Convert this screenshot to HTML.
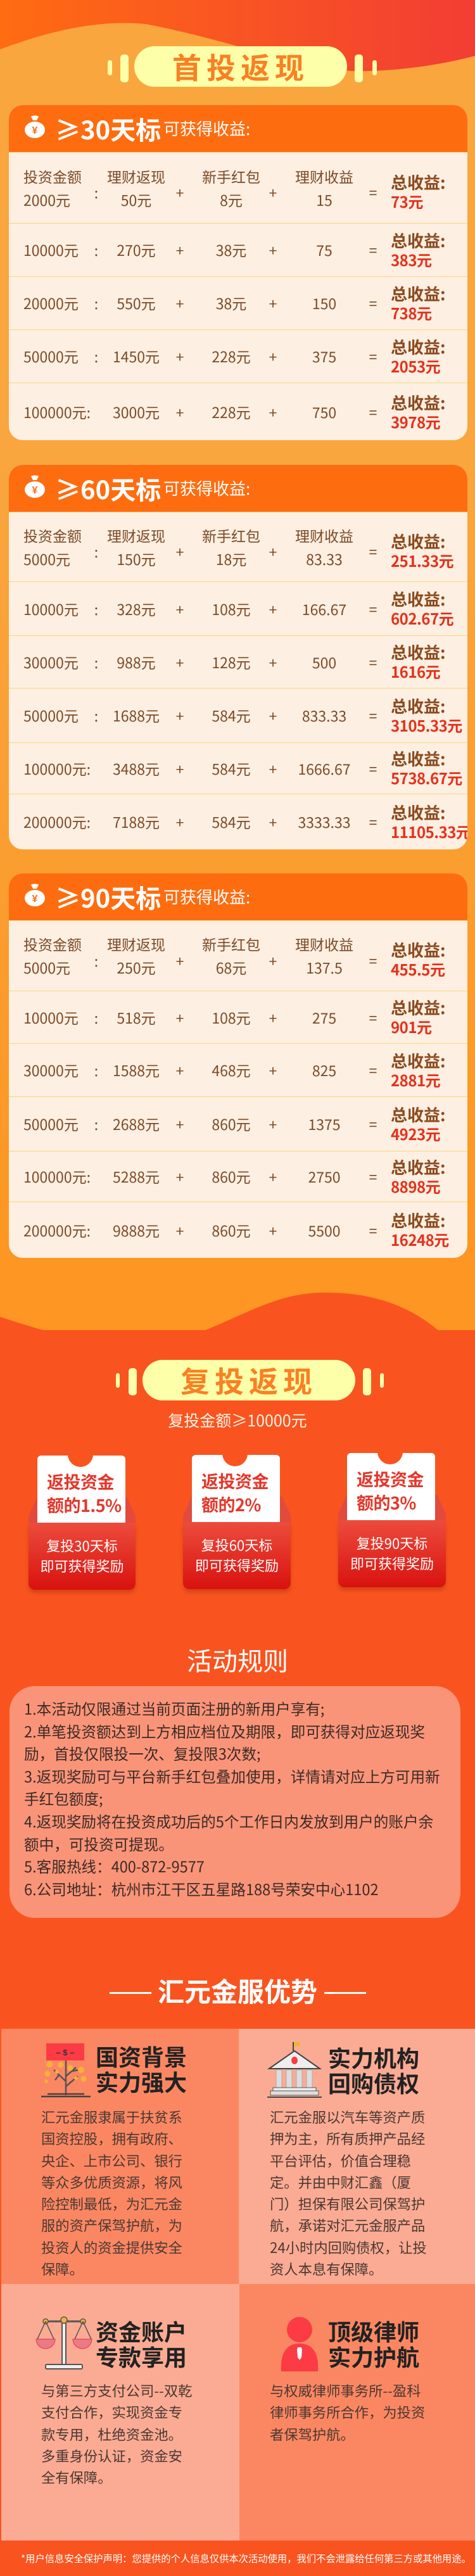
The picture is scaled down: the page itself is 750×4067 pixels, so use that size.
<!DOCTYPE html>
<html><head><meta charset="utf-8">
<style>
*{margin:0;padding:0;box-sizing:border-box}
body{width:750px;height:4067px;position:relative;overflow:hidden;font-family:"Liberation Sans","Noto Sans CJK SC",sans-serif;background:#f9541f}
.abs{position:absolute}
.topbg{left:0;top:0;width:750px;height:2100px;background:linear-gradient(#f9a63f 0,#f9a63f 700px,#fd9622 2000px)}
.bar{position:absolute;background:#feffa9;border-radius:5px}
.pill{position:absolute;background:#feffa9;border-radius:34px;text-align:center;color:#f98024;font-weight:bold;font-size:46px;letter-spacing:8px;font-family:"Noto Sans CJK SC",sans-serif}
.card{position:absolute;left:14px;width:724px;background:#fdefe2;border-radius:22px;overflow:hidden}
.hd{height:74px;background:#fe6c10;position:relative;color:#fff}
.bag{position:absolute;left:24px;top:16px}
.hd .t{position:absolute;left:73px;top:8px;font-size:40px;font-weight:bold;font-family:"Noto Sans CJK SC",sans-serif}
.hd .s{position:absolute;left:244px;top:18px;font-size:26px;font-family:"Noto Sans CJK SC",sans-serif}
.r{position:relative;border-top:1px solid #fbd77a;color:#7b4a26;font-size:23px;font-family:"Noto Sans CJK SC",sans-serif}
.r:first-of-type{border-top:none}
.c{position:absolute;top:0;height:100%;display:flex;align-items:center;justify-content:center;text-align:center;line-height:37px;white-space:nowrap}
.c1{left:23px;width:auto;justify-content:flex-start;text-align:left}
.k{left:118px;width:40px}
.c2{left:141px;width:120px}
.p1{left:250px;width:40px}
.c3{left:291px;width:120px}
.p2{left:397px;width:40px}
.c4{left:438px;width:120px}
.e{left:555px;width:40px}
.tot{left:603px;justify-content:flex-start;text-align:left;line-height:30px}
.tot b{display:block;color:#8b4a1e;font-size:26px}
.tot i{display:block;font-style:normal;font-weight:bold;color:#e5311b;font-size:24px;letter-spacing:-0.5px}
.h .k,.h .p1,.h .p2,.h .e{padding-top:14px}
.h .tot{padding-top:12px}
.ticket{position:absolute;background:#fff;border-radius:6px 6px 0 0;overflow:hidden}
.notch{position:absolute;width:40px;height:40px;border-radius:50%;background:#f9541f;top:-22px}
.ticket p{position:absolute;left:15px;top:22px;color:#e4372b;font-size:27px;font-weight:bold;line-height:37px;white-space:nowrap;letter-spacing:-0.5px;font-family:"Noto Sans CJK SC",sans-serif}
.back{position:absolute;background:#e14a3c;clip-path:polygon(8% 0,92% 0,100% 60%,100% 100%,0 100%,0 60%)}
.pocket{position:absolute;background:linear-gradient(#ec4c3c,#d9120f);border-radius:4px 4px 10px 10px;box-shadow:0 5px 6px rgba(150,40,10,.35);color:#fff;font-size:22px;text-align:center;line-height:32px;white-space:nowrap;font-family:"Noto Sans CJK SC",sans-serif}
.rules{position:absolute;left:15px;top:2662px;width:712px;height:366px;background:#fa9478;border-radius:40px;padding:18px 20px 0 23px;color:#3b2a26;font-size:23.6px;line-height:35.6px;font-family:"Noto Sans CJK SC",sans-serif}
.cell{position:absolute}
.cell h3{position:absolute;font-size:36px;line-height:40px;color:#222;font-weight:bold;font-family:"Noto Sans CJK SC",sans-serif}
.cell .b{position:absolute;font-size:22.3px;line-height:34.3px;color:#4a3833;white-space:nowrap;font-family:"Noto Sans CJK SC",sans-serif}
</style></head><body>
<div class="abs topbg"></div>
<svg class="abs" style="left:0;top:0" width="750" height="130">
<defs><linearGradient id="g1" x1="0" x2="1"><stop offset="0" stop-color="#ff6c12"/><stop offset="1" stop-color="#f23d34"/></linearGradient></defs>
<path d="M0,0 H750 V88 C700,102 620,114 555,112 C470,108 360,62 230,38 C150,30 70,52 0,78 Z" fill="url(#g1)"/>
</svg>
<div class="bar" style="left:170px;top:95px;width:7px;height:24px"></div>
<div class="bar" style="left:190px;top:86px;width:13px;height:44px"></div>
<div class="bar" style="left:560px;top:86px;width:13px;height:44px"></div>
<div class="bar" style="left:588px;top:95px;width:7px;height:24px"></div>
<div class="pill" style="left:212px;top:73px;width:336px;height:64px;line-height:64px">首投返现</div>

<!-- card 1 -->
<div class="card" style="top:166px;height:529px">
<div class="hd"><svg class="bag" width="34" height="36" viewBox="0 0 34 36"><path d="M11,2 C13,0 21,0 23,2 L20,8 L14,8 Z" fill="#fff"/><ellipse cx="17" cy="23" rx="16" ry="13" fill="#fff"/><text x="17" y="29" font-size="16" font-weight="bold" fill="#fe6c10" text-anchor="middle" font-family="Liberation Sans">¥</text></svg><span class="t">≥30天标</span><span class="s">可获得收益:</span></div>
<div class="r h" style="height:112px"><span class="c c1">投资金额<br>2000元</span><span class="c k">:</span><span class="c c2">理财返现<br>50元</span><span class="c p1">+</span><span class="c c3">新手红包<br>8元</span><span class="c p2">+</span><span class="c c4">理财收益<br>15</span><span class="c e">=</span><span class="c tot"><span><b>总收益:</b><i>73元</i></span></span></div>
<div class="r" style="height:84px"><span class="c c1">10000元</span><span class="c k">:</span><span class="c c2">270元</span><span class="c p1">+</span><span class="c c3">38元</span><span class="c p2">+</span><span class="c c4">75</span><span class="c e">=</span><span class="c tot"><span><b>总收益:</b><i>383元</i></span></span></div>
<div class="r" style="height:84px"><span class="c c1">20000元</span><span class="c k">:</span><span class="c c2">550元</span><span class="c p1">+</span><span class="c c3">38元</span><span class="c p2">+</span><span class="c c4">150</span><span class="c e">=</span><span class="c tot"><span><b>总收益:</b><i>738元</i></span></span></div>
<div class="r" style="height:84px"><span class="c c1">50000元</span><span class="c k">:</span><span class="c c2">1450元</span><span class="c p1">+</span><span class="c c3">228元</span><span class="c p2">+</span><span class="c c4">375</span><span class="c e">=</span><span class="c tot"><span><b>总收益:</b><i>2053元</i></span></span></div>
<div class="r" style="height:92px"><span class="c c1">100000元:</span><span class="c c2">3000元</span><span class="c p1">+</span><span class="c c3">228元</span><span class="c p2">+</span><span class="c c4">750</span><span class="c e">=</span><span class="c tot"><span><b>总收益:</b><i>3978元</i></span></span></div>
</div>

<!-- card 2 -->
<div class="card" style="top:734px;height:607px">
<div class="hd"><svg class="bag" width="34" height="36" viewBox="0 0 34 36"><path d="M11,2 C13,0 21,0 23,2 L20,8 L14,8 Z" fill="#fff"/><ellipse cx="17" cy="23" rx="16" ry="13" fill="#fff"/><text x="17" y="29" font-size="16" font-weight="bold" fill="#fe6c10" text-anchor="middle" font-family="Liberation Sans">¥</text></svg><span class="t">≥60天标</span><span class="s">可获得收益:</span></div>
<div class="r h" style="height:110px"><span class="c c1">投资金额<br>5000元</span><span class="c k">:</span><span class="c c2">理财返现<br>150元</span><span class="c p1">+</span><span class="c c3">新手红包<br>18元</span><span class="c p2">+</span><span class="c c4">理财收益<br>83.33</span><span class="c e">=</span><span class="c tot"><span><b>总收益:</b><i>251.33元</i></span></span></div>
<div class="r" style="height:85px"><span class="c c1">10000元</span><span class="c k">:</span><span class="c c2">328元</span><span class="c p1">+</span><span class="c c3">108元</span><span class="c p2">+</span><span class="c c4">166.67</span><span class="c e">=</span><span class="c tot"><span><b>总收益:</b><i>602.67元</i></span></span></div>
<div class="r" style="height:83px"><span class="c c1">30000元</span><span class="c k">:</span><span class="c c2">988元</span><span class="c p1">+</span><span class="c c3">128元</span><span class="c p2">+</span><span class="c c4">500</span><span class="c e">=</span><span class="c tot"><span><b>总收益:</b><i>1616元</i></span></span></div>
<div class="r" style="height:86px"><span class="c c1">50000元</span><span class="c k">:</span><span class="c c2">1688元</span><span class="c p1">+</span><span class="c c3">584元</span><span class="c p2">+</span><span class="c c4">833.33</span><span class="c e">=</span><span class="c tot"><span><b>总收益:</b><i>3105.33元</i></span></span></div>
<div class="r" style="height:81px"><span class="c c1">100000元:</span><span class="c c2">3488元</span><span class="c p1">+</span><span class="c c3">584元</span><span class="c p2">+</span><span class="c c4">1666.67</span><span class="c e">=</span><span class="c tot"><span><b>总收益:</b><i>5738.67元</i></span></span></div>
<div class="r" style="height:88px"><span class="c c1">200000元:</span><span class="c c2">7188元</span><span class="c p1">+</span><span class="c c3">584元</span><span class="c p2">+</span><span class="c c4">3333.33</span><span class="c e">=</span><span class="c tot"><span><b>总收益:</b><i>11105.33元</i></span></span></div>
</div>

<!-- card 3 -->
<div class="card" style="top:1379px;height:607px">
<div class="hd"><svg class="bag" width="34" height="36" viewBox="0 0 34 36"><path d="M11,2 C13,0 21,0 23,2 L20,8 L14,8 Z" fill="#fff"/><ellipse cx="17" cy="23" rx="16" ry="13" fill="#fff"/><text x="17" y="29" font-size="16" font-weight="bold" fill="#fe6c10" text-anchor="middle" font-family="Liberation Sans">¥</text></svg><span class="t">≥90天标</span><span class="s">可获得收益:</span></div>
<div class="r h" style="height:111px"><span class="c c1">投资金额<br>5000元</span><span class="c k">:</span><span class="c c2">理财返现<br>250元</span><span class="c p1">+</span><span class="c c3">新手红包<br>68元</span><span class="c p2">+</span><span class="c c4">理财收益<br>137.5</span><span class="c e">=</span><span class="c tot"><span><b>总收益:</b><i>455.5元</i></span></span></div>
<div class="r" style="height:83px"><span class="c c1">10000元</span><span class="c k">:</span><span class="c c2">518元</span><span class="c p1">+</span><span class="c c3">108元</span><span class="c p2">+</span><span class="c c4">275</span><span class="c e">=</span><span class="c tot"><span><b>总收益:</b><i>901元</i></span></span></div>
<div class="r" style="height:84px"><span class="c c1">30000元</span><span class="c k">:</span><span class="c c2">1588元</span><span class="c p1">+</span><span class="c c3">468元</span><span class="c p2">+</span><span class="c c4">825</span><span class="c e">=</span><span class="c tot"><span><b>总收益:</b><i>2881元</i></span></span></div>
<div class="r" style="height:86px"><span class="c c1">50000元</span><span class="c k">:</span><span class="c c2">2688元</span><span class="c p1">+</span><span class="c c3">860元</span><span class="c p2">+</span><span class="c c4">1375</span><span class="c e">=</span><span class="c tot"><span><b>总收益:</b><i>4923元</i></span></span></div>
<div class="r" style="height:80px"><span class="c c1">100000元:</span><span class="c c2">5288元</span><span class="c p1">+</span><span class="c c3">860元</span><span class="c p2">+</span><span class="c c4">2750</span><span class="c e">=</span><span class="c tot"><span><b>总收益:</b><i>8898元</i></span></span></div>
<div class="r" style="height:89px"><span class="c c1">200000元:</span><span class="c c2">9888元</span><span class="c p1">+</span><span class="c c3">860元</span><span class="c p2">+</span><span class="c c4">5500</span><span class="c e">=</span><span class="c tot"><span><b>总收益:</b><i>16248元</i></span></span></div>
</div>

<!-- lower wave -->
<svg class="abs" style="left:0;top:2030px" width="750" height="160">
<path d="M0,49 C80,75 150,95 215,94 C330,92 400,15 502,11 C600,8 690,40 750,140 V160 H0 Z" fill="#f9541f"/>
</svg>

<div class="bar" style="left:183px;top:2168px;width:6px;height:23px"></div>
<div class="bar" style="left:203px;top:2160px;width:13px;height:43px"></div>
<div class="bar" style="left:573px;top:2160px;width:13px;height:43px"></div>
<div class="bar" style="left:600px;top:2168px;width:6px;height:23px"></div>
<div class="pill" style="left:225px;top:2147px;width:336px;height:64px;line-height:64px">复投返现</div>
<div class="abs" style="left:0;width:750px;top:2224px;text-align:center;color:#fff3e6;font-size:25px;line-height:36px;font-family:'Noto Sans CJK SC',sans-serif">复投金额≥10000元</div>

<!-- tickets -->
<div class="back" style="left:45px;top:2364px;width:169px;height:50px"></div>
<div class="ticket" style="left:59px;top:2298px;width:139px;height:107px"><div class="notch" style="left:48px"></div><p>返投资金<br>额的1.5%</p></div>
<div class="pocket" style="left:45px;top:2404px;width:169px;height:106px;padding-top:20px">复投30天标<br>即可获得奖励</div>

<div class="back" style="left:289px;top:2363px;width:170px;height:50px"></div>
<div class="ticket" style="left:303px;top:2297px;width:139px;height:107px"><div class="notch" style="left:48px"></div><p>返投资金<br>额的2%</p></div>
<div class="pocket" style="left:289px;top:2403px;width:170px;height:106px;padding-top:20px">复投60天标<br>即可获得奖励</div>

<div class="back" style="left:534px;top:2360px;width:170px;height:50px"></div>
<div class="ticket" style="left:548px;top:2294px;width:139px;height:107px"><div class="notch" style="left:48px"></div><p>返投资金<br>额的3%</p></div>
<div class="pocket" style="left:534px;top:2400px;width:170px;height:106px;padding-top:20px">复投90天标<br>即可获得奖励</div>

<div class="abs" style="left:0;width:750px;top:2594px;text-align:center;color:#fff;font-size:40px;line-height:52px;font-family:'Noto Sans CJK SC',sans-serif">活动规则</div>
<div class="rules">1.本活动仅限通过当前页面注册的新用户享有;<br>2.单笔投资额达到上方相应档位及期限，即可获得对应返现奖励，首投仅限投一次、复投限3次数;<br>3.返现奖励可与平台新手红包叠加使用，详情请对应上方可用新手红包额度;<br>4.返现奖励将在投资成功后的5个工作日内发放到用户的账户余额中，可投资可提现。<br>5.客服热线：400-872-9577<br>6.公司地址：杭州市江干区五星路188号荣安中心1102</div>

<div class="abs" style="left:173px;top:3145px;width:66px;height:3px;background:#fff"></div>
<div class="abs" style="left:512px;top:3145px;width:66px;height:3px;background:#fff"></div>
<div class="abs" style="left:245px;width:260px;top:3116px;text-align:center;color:#fff;font-size:42px;line-height:54px;font-weight:bold;font-family:'Noto Sans CJK SC',sans-serif">汇元金服优势</div>

<!-- grid -->
<div class="cell" style="left:2px;top:3203px;width:375px;height:403px;background:#fb8762">
<svg class="abs" style="left:63px;top:23px" width="80" height="86" viewBox="0 0 80 86">
<rect x="8" y="0" width="60" height="27" fill="#fc3b44"/>
<text x="38" y="19" font-size="13" fill="#333" text-anchor="middle" font-family="Liberation Sans" font-weight="bold">–  $  –</text>
<path d="M39,27 V82 M39,60 L20,42 M39,52 L55,38 M39,68 L58,52 M28,50 L22,58 M48,44 L60,42" stroke="#555" stroke-width="2.5" fill="none"/>
<g fill="#f4b23a"><circle cx="13" cy="33" r="5"/><circle cx="31" cy="34" r="4.5"/><circle cx="46" cy="39" r="4.5"/><circle cx="63" cy="42" r="5"/><circle cx="10" cy="48" r="4.5"/><circle cx="67" cy="56" r="4.5"/><circle cx="25" cy="45" r="3"/><circle cx="55" cy="55" r="3"/><circle cx="8" cy="60" r="3"/></g>
<path d="M0,84 H78 M10,80 H68" stroke="#444" stroke-width="2.5"/>
</svg>
<h3 style="left:149px;top:23px">国资背景<br>实力强大</h3>
<div class="b" style="left:63px;top:122px">汇元金服隶属于扶贫系<br>国资控股，拥有政府、<br>央企、上市公司、银行<br>等众多优质资源，将风<br>险控制最低，为汇元金<br>服的资产保驾护航，为<br>投资人的资金提供安全<br>保障。</div>
</div>
<div class="cell" style="left:377px;top:3203px;width:373px;height:403px;background:#fbab93">
<svg class="abs" style="left:45px;top:19px" width="86" height="90" viewBox="0 0 86 90">
<path d="M41,2 V16" stroke="#444" stroke-width="2"/><path d="M42,2 H52 V9 H42 Z" fill="#f4b23a"/>
<path d="M3,44 L43,16 L83,44 Z" fill="#eee" stroke="#444" stroke-width="2"/>
<ellipse cx="43" cy="31" rx="5" ry="6" fill="#fc3b44"/>
<g fill="#ddd" stroke="#aaa"><rect x="14" y="46" width="9" height="28"/><rect x="30" y="46" width="9" height="28"/><rect x="46" y="46" width="9" height="28"/><rect x="62" y="46" width="9" height="28"/></g>
<rect x="9" y="74" width="68" height="5" fill="#eee" stroke="#555"/><rect x="5" y="79" width="76" height="7" fill="#ddd" stroke="#555"/>
<path d="M0,89 H86" stroke="#444" stroke-width="2"/>
</svg>
<h3 style="left:141px;top:25px">实力机构<br>回购债权</h3>
<div class="b" style="left:49px;top:122px">汇元金服以汽车等资产质<br>押为主，所有质押产品经<br>平台评估，价值合理稳<br>定。并由中财汇鑫（厦<br>门）担保有限公司保驾护<br>航，承诺对汇元金服产品<br>24小时内回购债权，让投<br>资人本息有保障。</div>
</div>
<div class="cell" style="left:2px;top:3606px;width:376px;height:405px;background:#fbab93">
<svg class="abs" style="left:54px;top:47px" width="90" height="88" viewBox="0 0 90 88">
<path d="M16,12 H75" stroke="#555" stroke-width="3"/>
<rect x="42" y="12" width="6" height="68" fill="#eee" stroke="#555" stroke-width="2"/>
<circle cx="45" cy="10" r="5" fill="#f4b23a" stroke="#555" stroke-width="1.5"/>
<circle cx="16" cy="12" r="4" fill="#f4b23a" stroke="#555" stroke-width="1.5"/><circle cx="75" cy="12" r="4" fill="#f4b23a" stroke="#555" stroke-width="1.5"/>
<path d="M16,12 L3,40 M16,12 L29,40 M75,12 L62,40 M75,12 L88,40" stroke="#555" stroke-width="1.5"/>
<path d="M1,40 H31 A15,15 0 0 1 1,40 Z" fill="#ea7a85" stroke="#e34"/><path d="M59,40 H89 A15,15 0 0 1 59,40 Z" fill="#ea7a85" stroke="#e34"/>
<rect x="16" y="80" width="58" height="7" rx="2" fill="#eee" stroke="#555" stroke-width="2"/>
</svg>
<h3 style="left:149px;top:54px">资金账户<br>专款享用</h3>
<div class="b" style="left:63px;top:151px">与第三方支付公司--双乾<br>支付合作，实现资金专<br>款专用，杜绝资金池。<br>多重身份认证，资金安<br>全有保障。</div>
</div>
<div class="cell" style="left:378px;top:3606px;width:372px;height:405px;background:#fb8762">
<svg class="abs" style="left:64px;top:52px" width="62" height="86" viewBox="0 0 62 86">
<circle cx="31" cy="20" r="20" fill="#fc3b44"/>
<path d="M2,86 C0,55 12,42 31,42 C50,42 62,55 60,86 Z" fill="#fc3b44"/>
<path d="M28,48 H34 L35,52 L34,64 L31,68 L28,64 L27,52 Z" fill="#fff"/>
</svg>
<h3 style="left:140px;top:54px">顶级律师<br>实力护航</h3>
<div class="b" style="left:48px;top:151px">与权威律师事务所--盈科<br>律师事务所合作，为投资<br>者保驾护航。</div>
</div>
<div class="abs" style="left:0;top:4011px;width:750px;height:56px;background:#f9541f;color:#fff;font-size:15.3px;line-height:56px;padding-left:33px;white-space:nowrap;font-family:'Noto Sans CJK SC',sans-serif">*用户信息安全保护声明：您提供的个人信息仅供本次活动使用，我们不会泄露给任何第三方或其他用途。</div>
</body></html>
